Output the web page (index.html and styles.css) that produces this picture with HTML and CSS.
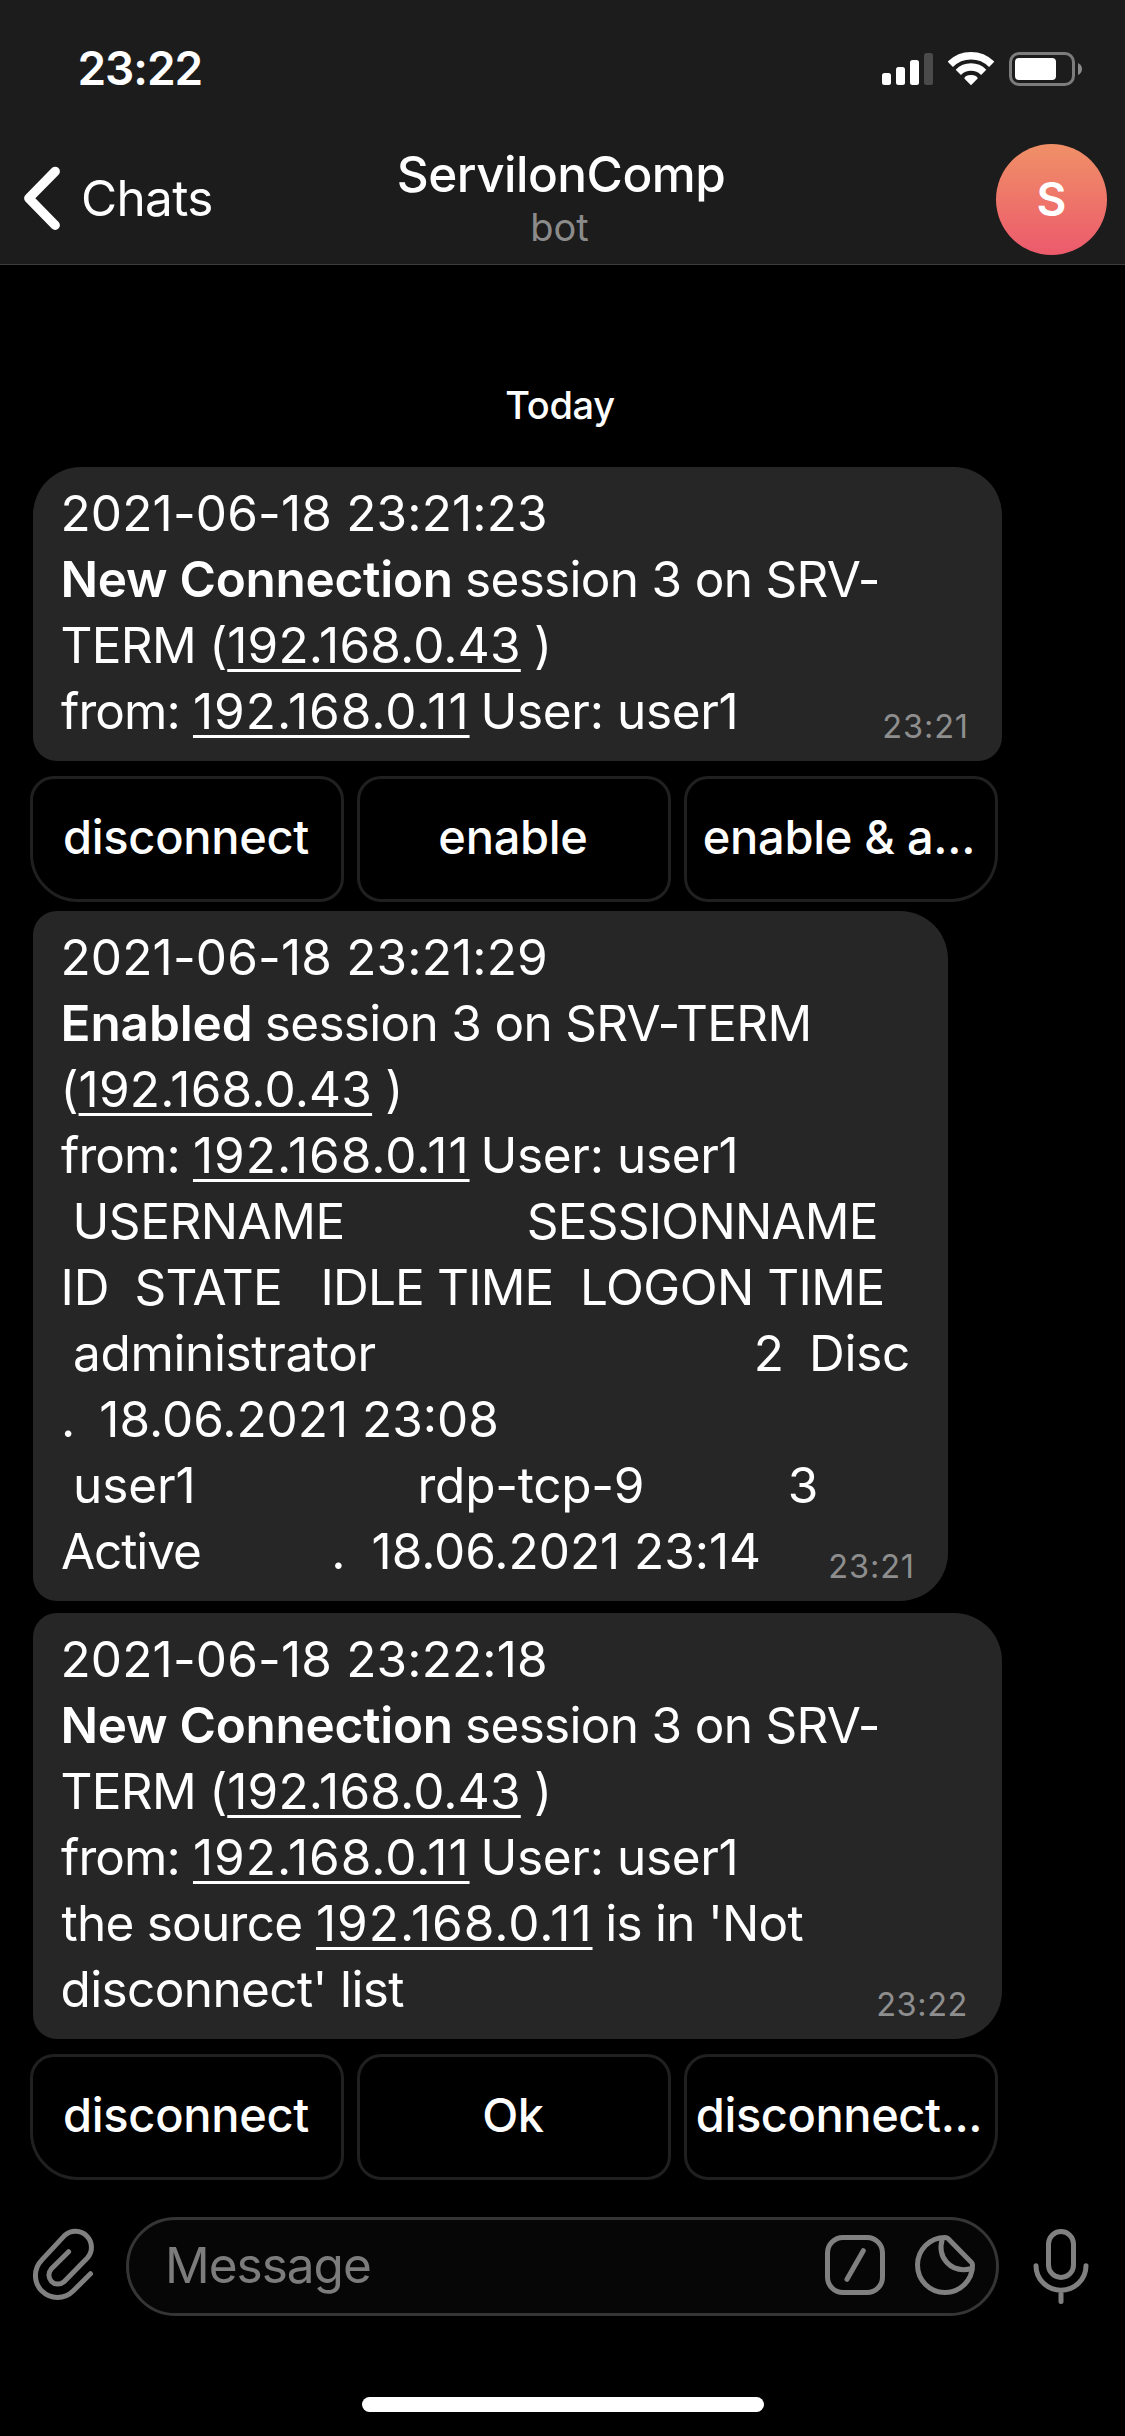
FILE: index.html
```
<!DOCTYPE html>
<html lang="en">
<head>
<meta charset="utf-8">
<title>ServilonComp</title>
<link rel="stylesheet" href="styles.css">
</head>
<body>
<header class="header">
  <div class="status">
    <span class="clock">23:22</span>
    <div class="status-icons">
      <svg width="51" height="34" viewBox="0 0 51 34" fill="#fff"><rect x="0" y="21" width="9" height="12" rx="2.5"/><rect x="14" y="15" width="9" height="18" rx="2.5"/><rect x="28" y="8" width="9" height="25" rx="2.5"/><rect x="42" y="1" width="9" height="32" rx="2.5" fill="#4a4a4a"/></svg>
      <svg width="46" height="34" viewBox="0 0 46 34"><g fill="none" stroke="#fff" stroke-width="7.4"><path d="M2.3 12.3A29.3 29.3 0 0 1 43.7 12.3"/><path d="M10.3 20.3A18 18 0 0 1 35.7 20.3"/></g><path fill="#fff" d="M23 33.3L16.3 26.6Q16.8 23 23 23T29.7 26.6Z"/></svg>
      <svg width="74" height="34" viewBox="0 0 74 34"><rect x="1.5" y="1.5" width="63" height="31" rx="8.5" fill="none" stroke="#7c7c7c" stroke-width="3"/><rect x="6" y="6" width="41" height="22" rx="4" fill="#fff"/><path fill="#8a8a8a" d="M69 11Q73 13 73 17T69 23Z"/></svg>
    </div>
  </div>
  <nav class="nav">
    <a class="back"><svg width="40" height="68" viewBox="0 0 40 68" fill="none" stroke="#fff" stroke-width="9.4" stroke-linecap="round" stroke-linejoin="round"><path d="M35.2 7.4L8.8 34.3L35.2 61.2"/></svg><span>Chats</span></a>
    <div class="peer"><h1 class="peer-name">ServilonComp</h1><p class="peer-status">bot</p></div>
    <div class="avatar">S</div>
  </nav>
</header>

<main class="chat">
  <p class="day">Today</p>

  <article class="bubble bubble-first">
    <p class="line num">2021-06-18 23:21:23</p>
    <p class="line"><b>New Connection</b> session 3 on SRV-</p>
    <p class="line">TERM (<a class="ip">192.168.0.43</a> )</p>
    <p class="line from">from: <a class="ip ip-src">192.168.0.11</a> <span class="user">User: user1</span></p>
    <time class="time">23:21</time>
  </article>
  <div class="actions"><button>disconnect</button><button>enable</button><button>enable &amp; a...</button></div>

  <article class="bubble bubble-report">
    <p class="line num">2021-06-18 23:21:29</p>
    <p class="line"><b class="wide">Enabled</b> session 3 on SRV-TERM</p>
    <p class="line">(<a class="ip">192.168.0.43</a> )</p>
    <p class="line from">from: <a class="ip ip-src">192.168.0.11</a> <span class="user">User: user1</span></p>
    <p class="line row"><span class="h-user">USERNAME</span><span class="h-session">SESSIONNAME</span></p>
    <p class="line row"><span class="h-id">ID</span><span class="h-state">STATE</span><span class="h-idle">IDLE TIME</span><span class="h-logon">LOGON TIME</span></p>
    <p class="line row"><span class="admin">administrator</span><span class="admin-id">2</span><span class="admin-state">Disc</span></p>
    <p class="line row"><span class="dot">.</span><span class="date">18.06.2021 23:08</span></p>
    <p class="line row"><span class="user-name">user1</span><span class="user-session">rdp-tcp-9</span><span class="user-id">3</span></p>
    <p class="line row"><span class="user-state">Active</span><span class="user-dot">.</span><span class="date user-date">18.06.2021 23:14</span></p>
    <time class="time">23:21</time>
  </article>

  <article class="bubble bubble-last">
    <p class="line num">2021-06-18 23:22:18</p>
    <p class="line"><b>New Connection</b> session 3 on SRV-</p>
    <p class="line">TERM (<a class="ip">192.168.0.43</a> )</p>
    <p class="line from">from: <a class="ip ip-src">192.168.0.11</a> <span class="user">User: user1</span></p>
    <p class="line source">the source <a class="ip ip-src">192.168.0.11</a> is in 'Not</p>
    <p class="line quote">disconnect' list</p>
    <time class="time time-even">23:22</time>
  </article>
  <div class="actions"><button>disconnect</button><button>Ok</button><button class="tight">disconnect...</button></div>
</main>

<footer class="composer">
  <svg width="68" height="78" viewBox="0 0 68 78" class="icon"><path d="M60.5 47.7L43.1 65.1A22 22 0 0 1 11.9 33.9L34.7 9.4A16 16 0 0 1 57.3 32L33.8 55.9A9 9 0 0 1 21.2 43.1L38.6 25.7"/></svg>
  <div class="field">
    <span class="placeholder">Message</span>
    <svg width="66" height="66" viewBox="0 0 66 66" class="icon"><rect x="5.5" y="5.5" width="55" height="55" rx="15.5"/><path d="M41.3 18.7L25 47.3"/></svg>
    <svg width="66" height="66" viewBox="0 0 66 66" class="icon"><path d="M33 5.5A27.5 27.5 0 1 0 60.5 33Q60.5 31.5 59.5 30.5L36 6.5Q35 5.5 33 5.5Z"/><path d="M30.3 7C25 25 38 42 60 36.5"/></svg>
  </div>
  <svg width="62" height="82" viewBox="0 0 62 82" class="icon mic"><rect x="18.5" y="5.5" width="25" height="46" rx="12.5"/><path d="M6 39.7A25 24.5 0 0 0 56 39.7M31 64.5V75.5"/></svg>
</footer>
<div class="home"></div>
</body>
</html>
```
FILE: styles.css
```
* { box-sizing: border-box; }
body {
  margin: 0;
  width: 1125px;
  height: 2436px;
  overflow: hidden;
  background: #000;
  color: #fff;
  font-family: Inter, "Liberation Sans", sans-serif;
  font-size: 49.5px;
}
p, h1 { margin: 0; }
svg { display: block; flex: none; }

/* Header */
.header { height: 265px; background: #1c1c1c; border-bottom: 1px solid #3d3d3d; }
.status {
  display: flex;
  justify-content: space-between;
  height: 132px;
  padding: 38px 42px 0 77.5px;
}
.clock { font-size: 46px; font-weight: 600; line-height: 60px; letter-spacing: -1.06px; }
.status-icons { display: flex; gap: 15px; padding-top: 14px; }
.nav {
  display: grid;
  grid-template-columns: 300px 1fr 300px;
  height: 132px;
  padding: 0 18px 0 20px;
}
.back { display: flex; align-items: center; gap: 21px; letter-spacing: -.68px; }
.peer { padding: 12px 5px 0 0; text-align: center; }
.peer-name { font-size: 49.5px; font-weight: 500; line-height: 60px; letter-spacing: -.52px; }
.peer-status { margin-left: -3px; font-size: 38px; line-height: 46px; color: #8b8b8b; }
.avatar {
  justify-self: end;
  width: 111px;
  height: 111px;
  margin-top: 12px;
  border-radius: 50%;
  background: linear-gradient(#f09067, #ec5a6c);
  font-size: 46px;
  font-weight: 600;
  line-height: 111px;
  text-align: center;
}

/* Conversation */
.chat { padding: 117px 0 0 33px; }
.day {
  margin: 0 38px 39px 0;
  font-size: 38px;
  font-weight: 500;
  line-height: 46px;
  letter-spacing: -.32px;
  text-align: center;
}
.bubble {
  position: relative;
  width: 969px;
  padding: 13px 0 17px 27.5px;
  background: #262626;
}
.bubble-first { border-radius: 48px 48px 24px 24px; }
.bubble-report { width: 915px; margin: 9px 0 12px; border-radius: 24px 48px 48px 24px; }
.bubble-last { border-radius: 24px 48px 48px 24px; }
.line { height: 66px; line-height: 66px; white-space: pre; letter-spacing: -.7px; }
.line b { margin-right: -1px; font-weight: 600; letter-spacing: -.28px; }
.line b.wide { letter-spacing: -.08px; }
.num { letter-spacing: .16px; }
.ip {
  margin-left: .7px;
  letter-spacing: .2px;
  text-decoration: underline;
  text-decoration-thickness: 3px;
  text-decoration-skip-ink: none;
  text-underline-offset: 6px;
}
.ip-src { margin: 0 -2px 0 0; letter-spacing: 1px; }
.from { padding-left: .5px; letter-spacing: -.9px; }
.source { padding-left: 1px; letter-spacing: -.75px; }
.source .ip-src { margin: 0 -.5px 0 .5px; }
.quote { letter-spacing: -.62px; }
.user { letter-spacing: -.35px; }

/* Session table inside the report */
.row { display: flex; letter-spacing: 0; }
.h-user { margin-left: 12px; letter-spacing: -.48px; }
.h-session { margin-left: 182px; letter-spacing: -.76px; }
.h-state { margin-left: 25px; letter-spacing: -.73px; }
.h-idle { margin-left: 38.5px; letter-spacing: -.83px; }
.h-logon { margin-left: 26.5px; letter-spacing: -.54px; }
.admin { margin-left: 12.5px; letter-spacing: -.36px; }
.admin-id { margin-left: 378px; }
.admin-state { margin-left: 25px; letter-spacing: -.28px; }
.dot { margin-left: .5px; }
.date { margin-left: 24px; }
.user-name { margin-left: 12.5px; letter-spacing: -.1px; }
.user-session { margin-left: 222px; letter-spacing: -.25px; }
.user-id { margin-left: 143.5px; }
.user-state { margin-left: .5px; letter-spacing: -1.09px; }
.user-dot { margin-left: 130.5px; }
.user-date { margin-left: 26px; letter-spacing: -.03px; }

.time {
  position: absolute;
  right: 33px;
  bottom: 14px;
  font-size: 32.5px;
  line-height: 40px;
  letter-spacing: .9px;
  color: #8e8e8e;
}
.time-even { right: 34px; letter-spacing: .58px; }

.actions {
  display: grid;
  grid-template-columns: repeat(3, 314px);
  gap: 13px;
  margin: 15px 0 0 -3px;
}
.actions button {
  height: 126px;
  padding: 0 2px 6px 0;
  border: 3px solid #202020;
  border-radius: 24px;
  background: #000;
  color: #fff;
  font: 500 47px Inter, "Liberation Sans", sans-serif;
  letter-spacing: -.3px;
  white-space: nowrap;
}
.actions button:first-child { border-bottom-left-radius: 48px; }
.actions button:last-child { padding-right: 4px; border-bottom-right-radius: 48px; }
.actions .tight { letter-spacing: -.42px; }

/* Composer */
.composer { display: flex; padding: 37px 33px 0 30px; }
.icon {
  margin-top: 9px;
  fill: none;
  stroke: #808080;
  stroke-width: 5;
  stroke-linecap: round;
  stroke-linejoin: round;
}
.field {
  display: flex;
  gap: 24px;
  width: 873px;
  height: 99px;
  margin: 0 31px 0 28px;
  padding: 3px 18px 0 36px;
  border: 3px solid #353535;
  border-radius: 50px;
  background: #060606;
}
.placeholder { flex: 1; line-height: 84px; letter-spacing: -1px; color: #7c7c7c; }
.home { width: 402px; height: 15px; margin: 81px auto 0; border-radius: 8px; background: #fff; }
```
